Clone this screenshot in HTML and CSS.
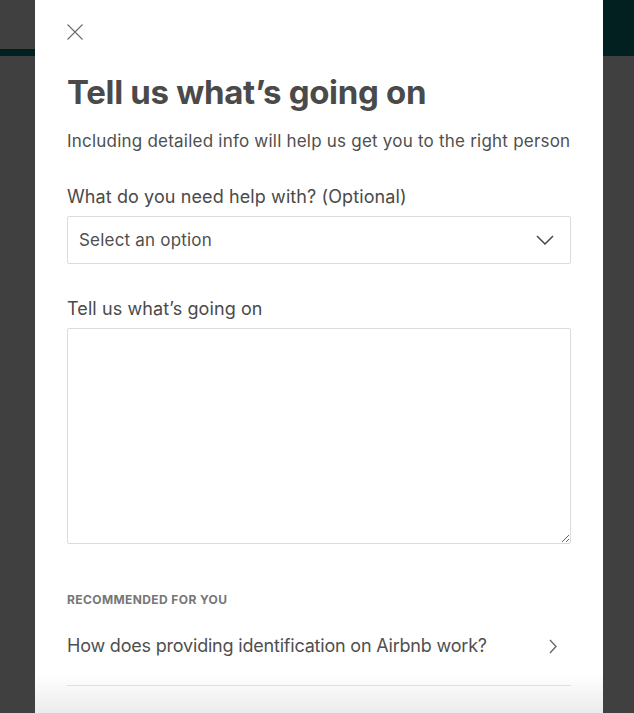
FILE: index.html
```html
<!DOCTYPE html>
<html lang="en">
<head>
<meta charset="utf-8">
<title>Tell us what's going on</title>
<link rel="stylesheet" href="styles.css">
</head>
<body>
<div class="page">
  <div class="topbar">
    <div class="topbar-brand"></div>
    <div class="topbar-rest"></div>
  </div>
</div>
<div class="modal">
  <div class="modal-body">
    <button class="close" aria-label="Close">
      <svg width="16" height="16" viewBox="0 0 16 16"><path d="M0.5 0.5 L15.5 15.5 M15.5 0.5 L0.5 15.5" stroke="#6a6a6a" stroke-width="1.1" fill="none"/></svg>
    </button>
    <h1 class="title">Tell us what’s going on</h1>
    <p class="subtitle">Including detailed info will help us get you to the right person</p>
    <label class="label">What do you need help with? (Optional)</label>
    <div class="select">
      <span class="select-text">Select an option</span>
      <svg class="chev-down" width="18" height="10" viewBox="0 0 18 10"><path d="M1 1 L9 9 L17 1" stroke="#484848" stroke-width="1.5" fill="none"/></svg>
    </div>
    <label class="label label-2">Tell us what’s going on</label>
    <textarea class="textarea"></textarea>
    <div class="rec-title">RECOMMENDED FOR YOU</div>
    <a class="rec-item" href="#">
      <span>How does providing identification on Airbnb work?</span>
      <svg width="8" height="15" viewBox="0 0 8 15"><path d="M1 1 L7 7.5 L1 14" stroke="#6a6a6a" stroke-width="1.4" fill="none"/></svg>
    </a>
  </div>
  <div class="fade"></div>
</div>
</body>
</html>
```
FILE: styles.css
```css
html, body {
  margin: 0;
  padding: 0;
}
body {
  width: 634px;
  height: 713px;
  overflow: hidden;
  background: #404040;
  font-family: "Inter", "Liberation Sans", sans-serif;
  color: #484848;
  position: relative;
}
.topbar {
  display: flex;
  height: 56px;
  background: #01201f;
}
.topbar-brand {
  width: 40px;
  height: 49px;
  background: #404040;
}
.topbar-rest {
  flex: 1;
}
.modal {
  position: absolute;
  left: 35px;
  top: 0;
  width: 568px;
  height: 713px;
  background: #fff;
  overflow: hidden;
}
.modal-body {
  display: flex;
  flex-direction: column;
  padding: 24px 32px 0 32px;
}
.close {
  width: 16px;
  height: 16px;
  padding: 0;
  border: 0;
  background: none;
  display: block;
}
.close svg { display: block; }
.title {
  margin: 32px 0 0 0;
  font-size: 33px;
  line-height: 40px;
  font-weight: 700;
  letter-spacing: -0.3px;
  color: #4a4a4a;
}
.subtitle {
  margin: 17px 0 0 0;
  font-size: 17px;
  line-height: 24px;
  font-weight: 400;
  letter-spacing: 0.22px;
  color: #4f4f4f;
}
.label {
  display: block;
  margin-top: 32px;
  font-size: 18px;
  line-height: 24px;
  letter-spacing: 0.1px;
  color: #4a4a4a;
}
.select {
  margin-top: 7px;
  height: 48px;
  box-sizing: border-box;
  border: 1px solid #dbdbdb;
  border-radius: 2px;
  display: flex;
  align-items: center;
  justify-content: space-between;
  padding: 0 16px 0 11px;
}
.select-text {
  font-size: 17px;
  letter-spacing: 0.2px;
  color: #4f4f4f;
}
.chev-down { display: block; }
.label-2 {
  margin-top: 33px;
}
.textarea {
  margin-top: 7px;
  height: 216px;
  box-sizing: border-box;
  border: 1px solid #dbdbdb;
  border-radius: 2px;
  resize: vertical;
  font: inherit;
}
.rec-title {
  margin-top: 48px;
  font-size: 12px;
  line-height: 16px;
  font-weight: 700;
  letter-spacing: 0.4px;
  color: #767676;
}
.rec-item {
  margin-top: 26px;
  display: flex;
  align-items: center;
  justify-content: space-between;
  padding: 0 14px 27px 0;
  border-bottom: 1px solid #dbdbdb;
  text-decoration: none;
  color: #4f4f4f;
  font-size: 18px;
  line-height: 24px;
  letter-spacing: -0.2px;
}
.rec-item svg { display: block; }
.fade {
  position: absolute;
  left: 0;
  right: 0;
  bottom: 0;
  height: 40px;
  background: linear-gradient(to bottom, rgba(235,235,235,0), rgba(235,235,235,1));
  pointer-events: none;
}
```
